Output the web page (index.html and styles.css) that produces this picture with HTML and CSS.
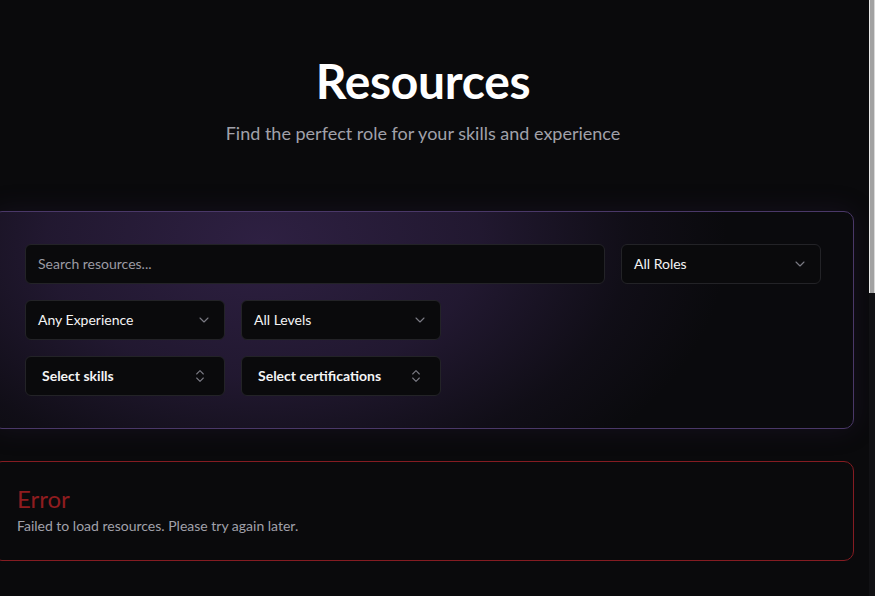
FILE: index.html
```html
<!DOCTYPE html>
<html lang="en">
<head>
<meta charset="utf-8">
<title>Resources</title>
<link rel="stylesheet" href="styles.css">
</head>
<body>
<div class="page">
  <div class="wrap">
    <header class="hero">
      <h1 class="title">Resources</h1>
      <p class="subtitle">Find the perfect role for your skills and experience</p>
    </header>

    <section class="filters">
      <div class="row">
        <input class="search" type="text" placeholder="Search resources...">
        <button class="select">
          <span>All Roles</span>
          <svg class="chev" viewBox="0 0 24 24"><path d="m6 9 6 6 6-6"/></svg>
        </button>
      </div>
      <div class="row">
        <button class="select">
          <span>Any Experience</span>
          <svg class="chev" viewBox="0 0 24 24"><path d="m6 9 6 6 6-6"/></svg>
        </button>
        <button class="select">
          <span>All Levels</span>
          <svg class="chev" viewBox="0 0 24 24"><path d="m6 9 6 6 6-6"/></svg>
        </button>
      </div>
      <div class="row">
        <button class="select multi">
          <span>Select skills</span>
          <svg class="chev" viewBox="0 0 24 24"><path d="m7 15 5 5 5-5"/><path d="m7 9 5-5 5 5"/></svg>
        </button>
        <button class="select multi">
          <span>Select certifications</span>
          <svg class="chev" viewBox="0 0 24 24"><path d="m7 15 5 5 5-5"/><path d="m7 9 5-5 5 5"/></svg>
        </button>
      </div>
    </section>

    <section class="error">
      <h2 class="error-title">Error</h2>
      <p class="error-text">Failed to load resources. Please try again later.</p>
    </section>
  </div>
</div>
<div class="rail"><div class="thumb"></div></div>
</body>
</html>
```

FILE: styles.css
```css
* { box-sizing: border-box; }

html, body {
  margin: 0;
  height: 100%;
  overflow: hidden;
}

body {
  display: flex;
  background: #0a0a0c;
  color: #fafafa;
  font-family: "Lato", "Open Sans", sans-serif;
}

.page {
  flex: 1;
  min-width: 0;
}

.rail {
  width: 6px;
  flex: none;
  background: #111114;
}

.thumb {
  height: 293px;
  background: #a2a2a2;
  border-left: 1px solid #e9e9e9;
  border-right: 1px solid #d8d8d8;
}

.wrap {
  width: 862px;
  margin-left: -8px;
  padding-top: 57px;
}

.hero {
  text-align: center;
}

.title {
  margin: 0 0 14px;
  font-size: 48px;
  line-height: 48px;
  font-weight: 700;
  letter-spacing: -0.3px;
  color: #ffffff;
}

.subtitle {
  margin: 0;
  font-size: 18px;
  line-height: 28px;
  color: #a1a1aa;
}

.filters {
  margin-top: 64px;
  display: flex;
  flex-direction: column;
  gap: 16px;
  padding: 32px;
  border: 1px solid #4a3868;
  border-radius: 10px;
  background-color: #0a0a0d;
  background-image: radial-gradient(ellipse 540px 340px at 270px 30px,
    rgba(46, 32, 66, 1) 0%,
    rgba(40, 28, 58, 0.78) 40%,
    rgba(30, 22, 44, 0.32) 68%,
    rgba(10, 10, 13, 0) 86%);
  box-shadow: 0 0 28px rgba(70, 45, 110, 0.18);
}

.row {
  display: flex;
  gap: 16px;
}

.search,
.select {
  height: 40px;
  border: 1px solid #232327;
  border-radius: 6px;
  background: #0a0a0c;
  font-family: "Lato", "Open Sans", sans-serif;
  font-size: 14px;
  line-height: 18px;
  color: #f4f4f5;
}

.search {
  width: 580px;
  padding: 0 12px 1px;
  outline: none;
}

.search::placeholder {
  color: #9b9ba3;
}

.select {
  width: 200px;
  display: flex;
  align-items: center;
  justify-content: space-between;
  padding: 0 12px 1px;
  text-align: left;
  cursor: pointer;
}

.select.multi {
  padding: 0 16px 1px;
  font-weight: 700;
}

.chev {
  width: 16px;
  height: 16px;
  fill: none;
  stroke: #7b7b84;
  stroke-width: 1.6;
  stroke-linecap: round;
  stroke-linejoin: round;
}

.error {
  margin-top: 32px;
  padding: 23px 24px 24px;
  border: 1px solid #851c22;
  border-radius: 10px;
  background: #0a0a0c;
}

.error-title {
  margin: 0 0 3px;
  font-size: 24px;
  line-height: 28px;
  font-weight: 400;
  color: #8f1c1f;
}

.error-text {
  margin: 0;
  font-size: 14px;
  line-height: 20px;
  color: #a1a1aa;
}
```
